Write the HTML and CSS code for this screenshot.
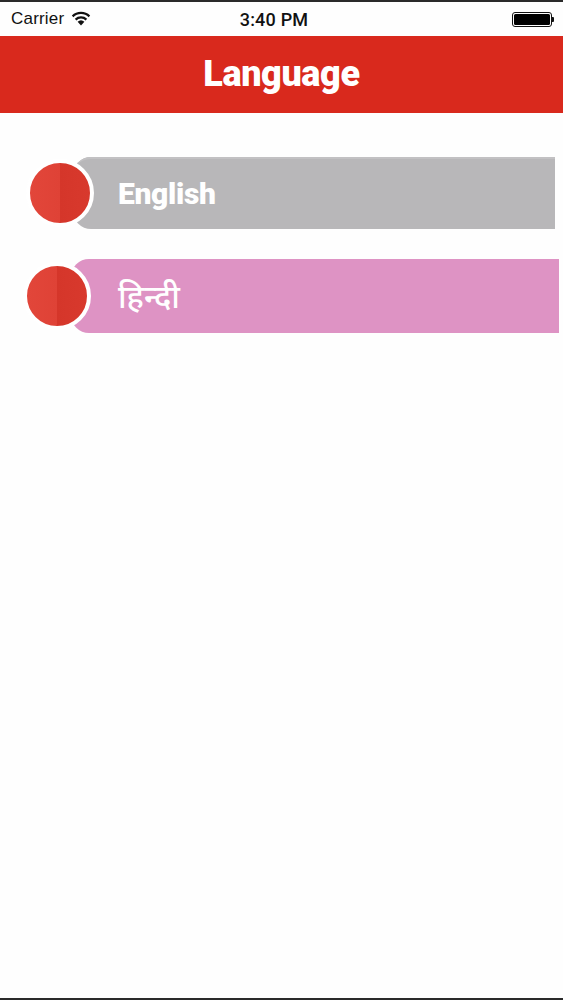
FILE: index.html
```html
<!DOCTYPE html>
<html lang="en">
<head>
<meta charset="utf-8">
<title>Language</title>
<link rel="stylesheet" href="styles.css">
</head>
<body>
<div class="screen">
  <div class="status">
    <div class="status-left">
      <span class="carrier">Carrier</span>
      <svg class="wifi" width="20" height="15" viewBox="0 0 20 15">
        <path d="M10 14.5 L6.6 10.8 A5 5 0 0 1 13.4 10.8 Z" fill="#111"/>
        <path d="M4.6 8.6 A7.8 7.8 0 0 1 15.4 8.6" fill="none" stroke="#111" stroke-width="2.2"/>
        <path d="M1.6 5.4 A12 12 0 0 1 18.4 5.4" fill="none" stroke="#111" stroke-width="2.2"/>
      </svg>
    </div>
    <div class="time">3:40 PM</div>
    <div class="status-right">
      <div class="battery"><div class="battery-fill"></div></div>
      <div class="battery-tip"></div>
    </div>
  </div>
  <header class="navbar">
    <h1 class="title">Language</h1>
  </header>
  <main class="list">
    <div class="row row-en">
      <div class="dot"></div>
      <div class="bar bar-grey"><span class="label">English</span></div>
    </div>
    <div class="row row-hi">
      <div class="dot"></div>
      <div class="bar bar-pink"><span class="label label-hi">हिन्दी</span></div>
    </div>
  </main>
</div>
</body>
</html>
```

FILE: styles.css
```css
* { box-sizing: border-box; }
html, body {
  margin: 0;
  padding: 0;
  background: #ffffff;
}
.screen {
  width: 563px;
  height: 1000px;
  border-top: 2px solid #2a2a2a;
  border-bottom: 2px solid #2a2a2a;
  background: #fefefe;
  font-family: "Liberation Sans", Arial, sans-serif;
  display: flex;
  flex-direction: column;
}
.status {
  height: 34px;
  display: grid;
  grid-template-columns: 1fr auto 1fr;
  align-items: center;
  padding: 0 9px 0 11px;
  color: #111;
}
.status-left {
  display: flex;
  align-items: center;
  gap: 7px;
}
.carrier {
  font-size: 17px;
  letter-spacing: 0.2px;
}
.wifi { margin-top: -2px; }
.time {
  font-family: Roboto, "Liberation Sans", sans-serif;
  font-size: 18px;
  font-weight: 500;
  letter-spacing: 0.2px;
  margin-right: 17px;
}
.status-right {
  display: flex;
  justify-content: flex-end;
  align-items: center;
}
.battery {
  width: 40px;
  height: 15px;
  border: 1.5px solid #111;
  border-radius: 3px;
  padding: 1px;
}
.battery-fill {
  width: 100%;
  height: 100%;
  background: #000;
  border-radius: 1.5px;
}
.battery-tip {
  width: 2px;
  height: 5px;
  background: #111;
  border-radius: 0 1px 1px 0;
}
.navbar {
  height: 77px;
  background: #d9291d;
  display: flex;
  align-items: center;
  justify-content: center;
}
.title {
  margin: 0;
  color: #fff;
  font-family: Roboto, "Liberation Sans", sans-serif;
  font-weight: 900;
  font-size: 36px;
  letter-spacing: -0.4px;
  padding-bottom: 2px;
}
.list {
  display: flex;
  flex-direction: column;
  gap: 30px;
  padding-top: 44px;
}
.row {
  display: flex;
  align-items: center;
}
.row-en { padding-left: 26px; padding-right: 8px; }
.row-hi { padding-left: 23px; padding-right: 4px; }
.dot {
  width: 68px;
  height: 68px;
  flex: 0 0 68px;
  border-radius: 50%;
  border: 4px solid #fff;
  background: linear-gradient(90deg, #e2463a 0%, #df4236 50%, #d5362a 50%, #d8392d 100%);
  position: relative;
  z-index: 2;
}
.bar {
  flex: 1;
  margin-left: -21px;
  border-radius: 18px 0 0 18px;
  display: flex;
  align-items: center;
  padding-left: 45px;
  position: relative;
  z-index: 1;
}
.bar-grey {
  height: 72px;
  background: #b8b7b9;
  box-shadow: inset 0 5px 0 -3px #c2c1c3;
}
.bar-pink {
  height: 74px;
  background: #de93c4;
  margin-left: -20px;
  padding-left: 47px;
}
.label {
  color: #fff;
  font-family: Roboto, "Liberation Sans", sans-serif;
  font-weight: 900;
  font-size: 30px;
  letter-spacing: -0.3px;
}
.label-hi {
  font-family: "Noto Sans Devanagari", "Noto Sans", "Lohit Devanagari", sans-serif;
  font-weight: 500;
  font-size: 32px;
  letter-spacing: 0;
  padding-top: 7px;
}
```
